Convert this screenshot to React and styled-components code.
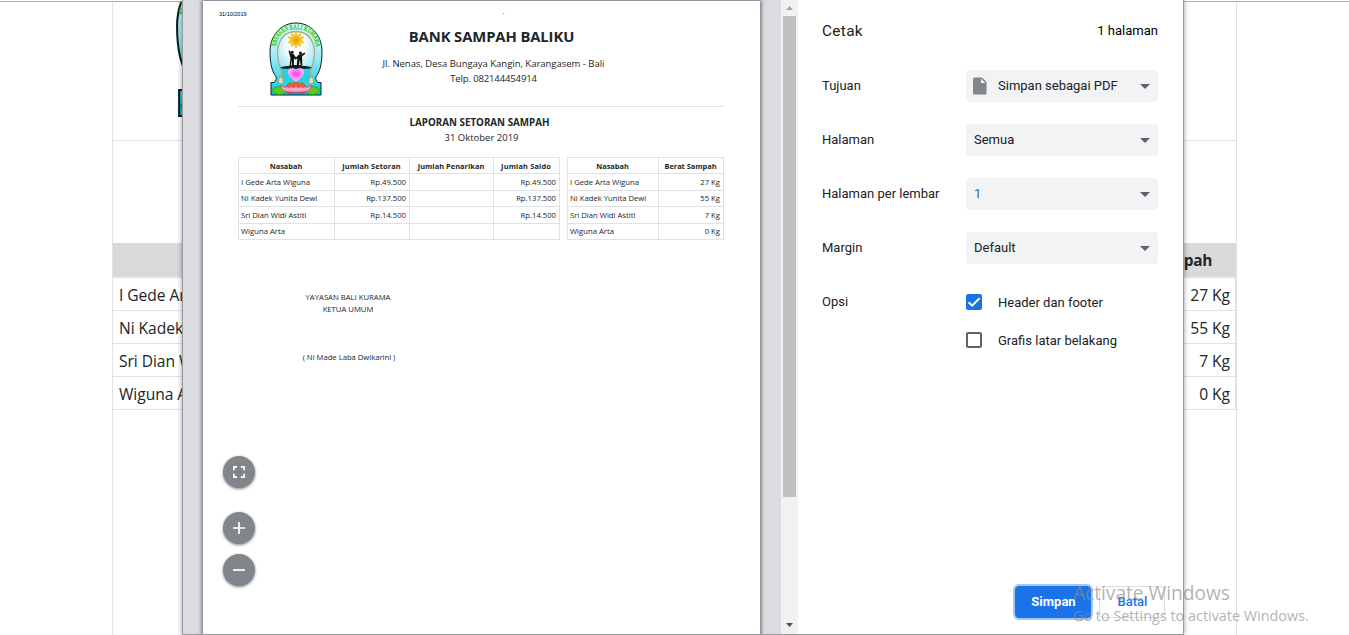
import React from "react";
import styled, { createGlobalStyle } from "styled-components";

const doc = `"Open Sans", "Noto Sans", sans-serif`;
const ui = `Roboto, "Liberation Sans", sans-serif`;

const GlobalStyle = createGlobalStyle`
  *, *::before, *::after { box-sizing: border-box; }
  body { margin: 0; background: #fff; overflow: hidden; }
`;

const Screen = styled.div`
  position: relative;
  width: 1349px;
  height: 635px;
  overflow: hidden;
  background: #fff;
`;

/* ---------- page behind the dialog ---------- */

const BackPage = styled.div`
  height: 635px;
  padding: 0 112px;
  display: flex;
  flex-direction: column;
  font-family: ${doc};
  color: #212529;
  &::before {
    content: "";
    height: 1px;
    margin: 1px -112px 0;
    background: #b4b4b4;
  }
`;

const BackSheet = styled.div`
  flex: 1;
  border: solid #dee2e6;
  border-width: 0 1px;
`;

const BackHeader = styled.div`
  height: 139px;
  padding-left: 62px;
  border-bottom: 1px solid #dee2e6;
  overflow: hidden;
  svg { display: block; margin-top: -37px; }
`;

const BackTable = styled.div`
  margin-top: 102px;
`;

const BackHead = styled.div`
  height: 35px;
  padding: 1px 24px 0 23px;
  background: #d9d9d9;
  border-bottom: 2px solid #dee2e6;
  text-align: right;
  font-size: 15.4px;
  font-weight: 700;
  line-height: 34px;
  letter-spacing: -0.3px;
`;

const BackRow = styled.div`
  height: 33px;
  padding: 1px 5px 0 6px;
  display: flex;
  justify-content: space-between;
  border: solid #dee2e6;
  border-width: 0 1px 1px 0;
  font-size: 15.6px;
  line-height: 33px;
  letter-spacing: -0.05px;
`;

/* ---------- dialog ---------- */

const Dialog = styled.div`
  position: absolute;
  left: 182px;
  top: 0;
  width: 1002px;
  height: 635px;
  display: flex;
  background: #fff;
  border: solid #999b9e;
  border-width: 0 1px 1px 1px;
  box-shadow: 0 0 5px rgba(0, 0, 0, 0.4);
`;

const Preview = styled.div`
  position: relative;
  width: 598px;
  padding: 1px 21px 0 20px;
  background: #dadce0;
  overflow: hidden;
`;

const Paper = styled.div`
  width: 557px;
  height: 640px;
  background: #fff;
  box-shadow: 0 0 4px 1px rgba(60, 60, 65, 0.75);
  font-family: ${doc};
  color: #212529;
`;

const RunningHead = styled.div`
  height: 21px;
  padding: 8px 0 0 16px;
  display: flex;
  font-family: "Liberation Sans", Arial, sans-serif;
  font-size: 5.5px;
  line-height: 10px;
  color: #000;
  span + span { margin-left: 256px; margin-top: -1px; }
`;

const Letterhead = styled.div`
  display: flex;
  height: 85px;
  margin: 0 36px 0 35px;
  border-bottom: 1px solid #dfe1e3;
  > svg { margin-left: 30.500px; flex: none; }
`;

const LetterText = styled.div`
  width: 342px;
  padding-top: 4px;
  text-align: center;
  white-space: nowrap;
`;

const Title = styled.div`
  padding-right: 4px;
  margin-bottom: 10px;
  font-size: 14.8px;
  font-weight: 700;
  line-height: 20px;
  letter-spacing: -0.1px;
`;

const Address = styled.div`
  font-size: 9.5px;
  line-height: 15px;
  letter-spacing: ${(p) => p.$spacing || 0}px;
`;

const ReportTitle = styled.div`
  margin-top: 8px;
  padding-right: 4px;
  text-align: center;
  font-size: 9.8px;
  font-weight: 700;
  line-height: 15px;
`;

const ReportDate = styled.div`
  margin-bottom: 12px;
  text-align: center;
  font-size: 9.5px;
  line-height: 15px;
`;

const Tables = styled.div`
  display: flex;
  gap: 7px;
  padding-left: 35px;
`;

const Grid = styled.div`
  display: grid;
  grid-template-columns: ${(p) => p.$columns};
  grid-template-rows: 16px 17px 16px 17px 16px;
  border: solid #dee2e6;
  border-width: 1px 0 0 1px;
`;

const HeadCell = styled.div`
  border: solid #dee2e6;
  border-width: 0 1px 1px 0;
  padding-right: 1px;
  text-align: center;
  font-size: 7.4px;
  font-weight: 700;
  line-height: 17px;
  letter-spacing: ${(p) => p.$spacing || 0}px;
  white-space: nowrap;
`;

const Cell = styled.div`
  border: solid #dee2e6;
  border-width: 0 1px 1px 0;
  padding: 0 3px 0 2px;
  text-align: ${(p) => (p.$right ? "right" : "left")};
  font-size: 7.7px;
  line-height: ${(p) => (p.$tight ? 14 : 16)}px;
  white-space: nowrap;
`;

const Signature = styled.div`
  width: 220px;
  margin: 51px 0 0 35px;
  text-align: center;
  font-size: 7.7px;
  line-height: 12px;
`;

const Signer = styled.div`
  margin-top: 36px;
  padding-left: 2px;
  letter-spacing: -0.02px;
`;

const ZoomControls = styled.div`
  position: absolute;
  left: 40px;
  top: 456px;
  display: flex;
  flex-direction: column;
  gap: 10px;
`;

const RoundButton = styled.button`
  width: 32px;
  height: 32px;
  padding: 0;
  border: 0;
  border-radius: 50%;
  background: #80868b;
  box-shadow: 0 1px 3px rgba(0, 0, 0, 0.5);
  margin-bottom: ${(p) => (p.$spaced ? 14 : 0)}px;
  svg { display: block; margin: 8px; }
`;

const Scrollbar = styled.div`
  width: 17px;
  display: flex;
  flex-direction: column;
  align-items: center;
  background: #f1f1f1;
`;

const Thumb = styled.div`
  width: 13px;
  height: 481px;
  background: #c1c1c1;
`;

const ScrollArrow = styled.svg`
  display: block;
  width: 17px;
  height: 16px;
  margin-top: ${(p) => (p.$end ? "auto" : 0)};
`;

const Settings = styled.div`
  flex: 1;
  display: flex;
  flex-direction: column;
  padding: 20px 25px 16px 24px;
  font-family: ${ui};
  font-size: 13px;
  color: #202124;
`;

const SettingsHead = styled.div`
  height: 50px;
  display: flex;
  justify-content: space-between;
  line-height: 21px;
`;

const Heading = styled.div`
  font-size: 15.4px;
  line-height: 23px;
  letter-spacing: 0.32px;
`;

const PageCount = styled.div`
  color: #000;
`;

const Field = styled.div`
  display: flex;
  height: 32px;
  margin-bottom: 22px;
  line-height: 32px;
`;

const FieldLabel = styled.div`
  width: 144px;
`;

const Select = styled.div`
  width: 192px;
  height: 32px;
  display: flex;
  align-items: center;
  padding: 0 8px;
  border-radius: 4px;
  background: #f1f3f4;
  color: ${(p) => p.$color || "inherit"};
  > svg:last-child { margin-left: auto; }
`;

const FileIcon = styled.svg`
  width: 14px;
  height: 18px;
  margin: 0 11px 0 -1px;
`;

const Options = styled.div`
  display: flex;
  flex-direction: column;
  gap: 6px;
`;

const Option = styled.div`
  display: flex;
  align-items: center;
  gap: 16px;
  height: 32px;
  padding-top: 1px;
`;

const CheckBox = styled.span`
  width: 16px;
  height: 16px;
  margin-top: -1px;
  border-radius: 2px;
  border: ${(p) => (p.$checked ? "0" : "2px solid #5f6368")};
  background: ${(p) => (p.$checked ? "#1a73e8" : "#fff")};
  svg { display: block; }
`;

const Actions = styled.div`
  display: flex;
  justify-content: flex-end;
  gap: 8px;
  margin: auto -7px 0 0;
`;

const Button = styled.button`
  width: ${(p) => (p.$primary ? 76 : 66)}px;
  height: 32px;
  padding: 0 0 0 1px;
  border-radius: 4px;
  border: 1px solid ${(p) => (p.$primary ? "#1a73e8" : "#dadce0")};
  background: ${(p) => (p.$primary ? "#1a73e8" : "#fff")};
  color: ${(p) => (p.$primary ? "#fff" : "#1a73e8")};
  box-shadow: ${(p) => (p.$primary ? "0 0 0 2px rgba(26, 115, 232, 0.4)" : "none")};
  font-family: ${ui};
  font-size: 13px;
  font-weight: ${(p) => (p.$primary ? 700 : 500)};
  line-height: 30px;
`;

const Watermark = styled.div`
  position: absolute;
  left: 1073px;
  top: 580px;
  font-family: ${doc};
  color: rgba(140, 140, 140, 0.68);
  white-space: nowrap;
  pointer-events: none;
`;

const WatermarkTitle = styled.div`
  font-size: 19.2px;
  line-height: 26px;
  letter-spacing: -0.04px;
`;

const WatermarkText = styled.div`
  font-size: 14.4px;
  line-height: 20px;
`;

const Caret = () => (
  <svg width="10" height="5" viewBox="0 0 10 5">
    <path d="M0 0h10L5 5z" fill="#5f6368" />
  </svg>
);

function Emblem({ id, width, height }) {
  const outline =
    "M2 60.500H5.200Q8.200 58 7 54.500C2.500 49 1 40 1 29.500C1 13.500 12 1 27 1S53 13.500 53 29.500C53 40 51.500 49 47 54.500Q45.800 58 48.800 60.500H52V73H2Z";
  return (
    <svg width={width} height={height} viewBox="0 0 54 74" preserveAspectRatio="none">
      <defs>
        <linearGradient id={`${id}-sky`} x1="0" y1="0" x2="0" y2="1">
          <stop offset="0" stopColor="#e8faff" />
          <stop offset="0.45" stopColor="#a5e8f8" />
          <stop offset="0.8" stopColor="#35dcea" />
          <stop offset="1" stopColor="#08c8dc" />
        </linearGradient>
        <radialGradient id={`${id}-glow`} cx="0.5" cy="0.3" r="0.65">
          <stop offset="0.35" stopColor="#fff" />
          <stop offset="1" stopColor="#8de4f5" />
        </radialGradient>
        <radialGradient id={`${id}-heart`} cx="0.5" cy="0.4" r="0.6">
          <stop offset="0" stopColor="#ff35f2" />
          <stop offset="1" stopColor="#ffd5f8" />
        </radialGradient>
        <path id={`${id}-arc`} d="M7 29C6.500 14 14 7.500 27 7.500S47.500 14 47 29" />
      </defs>
      <path d={outline} fill={`url(#${id}-sky)`} stroke="#0a1e26" strokeWidth="1" />
      <path
        d="M13 55Q13.500 50 10.500 43C5.500 27 10 9.500 27 9.500S48.500 27 43.500 43Q40.500 50 41 55"
        fill={`url(#${id}-glow)`}
        stroke="#b6a77c"
        strokeWidth="1.300"
      />
      <path d="M12 46H42L40 60H14Z" fill="#20d3e5" />
      <path d="M11.500 45Q14 50 13.500 55M42.500 45Q40 50 40.500 55" fill="none" stroke="#b6a77c" strokeWidth="1.300" />
      <path d="M11.500 54q-3 4-2 7q3 2.500 5-1q0-3.500-3-6M42.500 54q3 4 2 7q-3 2.500-5-1q0-3.500 3-6" fill="#e7dbaf" stroke="#96885c" strokeWidth="0.7" />
      <text fontFamily="Liberation Serif, serif" fontSize="7.600" fontWeight="700" fill="#35d313" stroke="#35d313" strokeWidth="0.25" textAnchor="middle">
        <textPath href={`#${id}-arc`} startOffset="50%" textLength="59" lengthAdjust="spacingAndGlyphs">
          YAYASAN BALI KUMARA
        </textPath>
      </text>
      <path
        d="M27 10l1.500 3.600 3.200-2.200-.6 3.800 3.900-.3-2.400 3.100 2.400 3-3.900-.2.600 3.700-3.200-2.100L27 26l-1.500-3.600-3.200 2.100.6-3.700-3.900.2 2.400-3-2.400-3.100 3.900.3-.6-3.800 3.200 2.200z"
        fill="#f5d219"
        stroke="#dca00c"
        strokeWidth="0.5"
      />
      <circle cx="27" cy="18" r="3" fill="#ffc400" stroke="#e98a00" strokeWidth="0.8" />
      <circle cx="27" cy="18" r="1" fill="#ef3b10" />
      <path d="M11 45.500q5-2 9-1.500l3-1h8l3 1q5-.5 9 1.500l-3 1.200H14z" fill="#101820" />
      <path
        d="M20.500 44l1-8-2-7 1.200-.5 2 3.500 2 0 2.300 3.600 2.800-3 2.500-.3 3.500-1.800.5 1.300-3.200 2.500.2 9.500h-1.500l-1-6-1 6h-2l.6-7.500-1.800 1.500-1.600-1.500-.2 7.500h-1.800l-.3-6-1 6z"
        fill="#171208"
      />
      <circle cx="23.200" cy="30.300" r="1.500" fill="#171208" />
      <circle cx="31.500" cy="31" r="1.500" fill="#171208" />
      <path d="M27 60C22 56 18.500 53 19 49C20 45.500 25 45.500 27 48C29 45.500 34 45.500 35 49C35.500 53 32 56 27 60Z" fill={`url(#${id}-heart)`} stroke="#d78ce0" strokeWidth="0.4" />
      <path d="M2.500 68q5-5 11-3l3 6q-5 3-10 1zM51.500 68q-5-5-11-3l-3 6q5 3 10 1z" fill="#5ccc1c" stroke="#178c26" strokeWidth="0.6" />
      <path d="M18 63q3-4 5-1q2-3 4-1q2-2 4 1q2-3 5 1v3H18z" fill="#e76925" stroke="#a63a18" strokeWidth="0.5" />
      <path d="M11.500 63.500q3 0 4.500 2q1-1.500 4 0q2-2 4 0q3-2 6 0q2-2 4 0q3-1.500 4 0q1.500-2 4.500-2q-1.500 6-7 6.500H18.500q-5.500-.5-7-6.500z" fill="#f9a5c8" stroke="#ed316f" strokeWidth="0.8" />
      <path d="M17 69.500q10 2.500 20 0l-2 2H19z" fill="#de2244" />
    </svg>
  );
}

const people = ["I Gede Arta Wiguna", "Ni Kadek Yunita Dewi", "Sri Dian Widi Astiti", "Wiguna Arta"];
const deposits = ["Rp.49.500", "Rp.137.500", "Rp.14.500", ""];
const weights = ["27 Kg", "55 Kg", "7 Kg", "0 Kg"];

export default function App() {
  return (
    <>
      <GlobalStyle />
      <Screen>
        <BackPage>
          <BackSheet>
            <BackHeader>
              <Emblem id="back" width={112} height={153} />
            </BackHeader>
            <BackTable>
              <BackHead>Berat Sampah</BackHead>
              {people.map((name, i) => (
                <BackRow key={name}>
                  <span>{name}</span>
                  <span>{weights[i]}</span>
                </BackRow>
              ))}
            </BackTable>
          </BackSheet>
        </BackPage>

        <Dialog>
          <Preview>
            <Paper>
              <RunningHead>
                <span>31/10/2019</span>
                <span>-</span>
              </RunningHead>
              <Letterhead>
                <Emblem id="letter" width={54} height={74} />
                <LetterText>
                  <Title>BANK SAMPAH BALIKU</Title>
                  <Address $spacing={-0.02}>Jl. Nenas, Desa Bungaya Kangin, Karangasem - Bali</Address>
                  <Address $spacing={-0.13}>Telp. 082144454914</Address>
                </LetterText>
              </Letterhead>
              <ReportTitle>LAPORAN SETORAN SAMPAH</ReportTitle>
              <ReportDate>31 Oktober 2019</ReportDate>
              <Tables>
                <Grid $columns="96px 75px 84px 66px">
                  <HeadCell>Nasabah</HeadCell>
                  <HeadCell $spacing={0.12}>Jumlah Setoran</HeadCell>
                  <HeadCell $spacing={0.05}>Jumlah Penarikan</HeadCell>
                  <HeadCell $spacing={0.15}>Jumlah Saldo</HeadCell>
                  {people.map((name, i) => (
                    <React.Fragment key={name}>
                      <Cell $tight={i % 2 === 1}>{name}</Cell>
                      <Cell $right $tight={i % 2 === 1}>{deposits[i]}</Cell>
                      <Cell />
                      <Cell $right $tight={i % 2 === 1}>{deposits[i]}</Cell>
                    </React.Fragment>
                  ))}
                </Grid>
                <Grid $columns="91px 65px">
                  <HeadCell>Nasabah</HeadCell>
                  <HeadCell>Berat Sampah</HeadCell>
                  {people.map((name, i) => (
                    <React.Fragment key={name}>
                      <Cell $tight={i % 2 === 1}>{name}</Cell>
                      <Cell $right $tight={i % 2 === 1}>{weights[i]}</Cell>
                    </React.Fragment>
                  ))}
                </Grid>
              </Tables>
              <Signature>
                <div>YAYASAN BALI KURAMA</div>
                <div>KETUA UMUM</div>
                <Signer>( Ni Made Laba Dwikarini )</Signer>
              </Signature>
            </Paper>
            <ZoomControls>
              <RoundButton $spaced>
                <svg width="16" height="16" viewBox="0 0 16 16" fill="none" stroke="#fff" strokeWidth="1.700">
                  <path d="M2.900 6.200V2.900h3.300M9.800 2.900H13.100v3.300M13.100 9.800V13.100H9.800M6.200 13.100H2.900V9.800" />
                </svg>
              </RoundButton>
              <RoundButton>
                <svg width="16" height="16" viewBox="0 0 16 16" stroke="#fff" strokeWidth="1.700">
                  <path d="M2 8h12M8 2v12" />
                </svg>
              </RoundButton>
              <RoundButton>
                <svg width="16" height="16" viewBox="0 0 16 16" stroke="#fff" strokeWidth="1.700">
                  <path d="M2 8h12" />
                </svg>
              </RoundButton>
            </ZoomControls>
          </Preview>
          <Scrollbar>
            <ScrollArrow viewBox="0 0 17 16">
              <path d="M5 10l3.500-4L12 10z" fill="#a3a3a3" />
            </ScrollArrow>
            <Thumb />
            <ScrollArrow $end viewBox="0 0 17 16">
              <path d="M5 5l3.500 4L12 5z" fill="#505050" />
            </ScrollArrow>
          </Scrollbar>
          <Settings>
            <SettingsHead>
              <Heading>Cetak</Heading>
              <PageCount>1 halaman</PageCount>
            </SettingsHead>
            <Field>
              <FieldLabel>Tujuan</FieldLabel>
              <Select>
                <FileIcon viewBox="0 0 14 18">
                  <path d="M1.500 .5H9L13.500 5V16a1.500 1.500 0 0 1-1.500 1.500H1.500A1.500 1.500 0 0 1 0 16V2A1.500 1.500 0 0 1 1.500 .5z" fill="#80868b" />
                  <path d="M8 1.800V6h4.300z" fill="#fff" />
                </FileIcon>
                Simpan sebagai PDF
                <Caret />
              </Select>
            </Field>
            <Field>
              <FieldLabel>Halaman</FieldLabel>
              <Select>Semua<Caret /></Select>
            </Field>
            <Field>
              <FieldLabel>Halaman per lembar</FieldLabel>
              <Select $color="#2f6a9c">1<Caret /></Select>
            </Field>
            <Field>
              <FieldLabel>Margin</FieldLabel>
              <Select>Default<Caret /></Select>
            </Field>
            <Field>
              <FieldLabel>Opsi</FieldLabel>
              <Options>
                <Option>
                  <CheckBox $checked>
                    <svg width="16" height="16" viewBox="0 0 16 16" fill="none" stroke="#fff" strokeWidth="2">
                      <path d="M2.600 8.200l3.600 3.500L13.500 4.200" />
                    </svg>
                  </CheckBox>
                  Header dan footer
                </Option>
                <Option>
                  <CheckBox />
                  Grafis latar belakang
                </Option>
              </Options>
            </Field>
            <Actions>
              <Button $primary>Simpan</Button>
              <Button>Batal</Button>
            </Actions>
          </Settings>
        </Dialog>

        <Watermark>
          <WatermarkTitle>Activate Windows</WatermarkTitle>
          <WatermarkText>Go to Settings to activate Windows.</WatermarkText>
        </Watermark>
      </Screen>
    </>
  );
}
